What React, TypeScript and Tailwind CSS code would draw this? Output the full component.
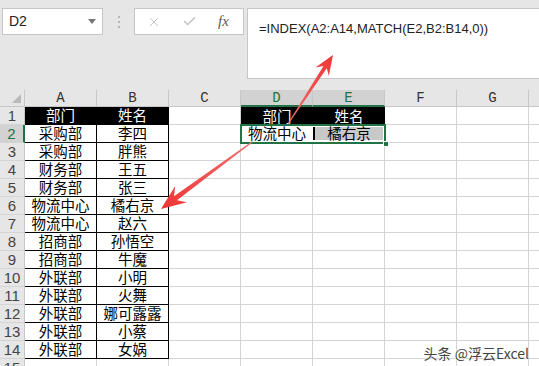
import { X, Check } from 'lucide-react';

const COLS = ['A', 'B', 'C', 'D', 'E', 'F', 'G'];

const table: [string, string][] = [
  ['部门', '姓名'],
  ['采购部', '李四'],
  ['采购部', '胖熊'],
  ['财务部', '王五'],
  ['财务部', '张三'],
  ['物流中心', '橘右京'],
  ['物流中心', '赵六'],
  ['招商部', '孙悟空'],
  ['招商部', '牛魔'],
  ['外联部', '小明'],
  ['外联部', '火舞'],
  ['外联部', '娜可露露'],
  ['外联部', '小蔡'],
  ['外联部', '女娲'],
];

const cjk = "font-['Noto_Sans_CJK_SC','Noto_Sans',sans-serif]";

// polygon for a tapered annotation arrow
function arrow(t: [number, number], p: [number, number], headLen: number, headHalf: number, tailW: number, neckW: number) {
  const dx = p[0] - t[0];
  const dy = p[1] - t[1];
  const len = Math.hypot(dx, dy);
  const ux = dx / len;
  const uy = dy / len;
  const nx = -uy;
  const ny = ux;
  const join = [p[0] - ux * headLen * 0.72, p[1] - uy * headLen * 0.72];
  const barb = [p[0] - ux * headLen, p[1] - uy * headLen];
  const pts = [
    [t[0] + (nx * tailW) / 2, t[1] + (ny * tailW) / 2],
    [join[0] + (nx * neckW) / 2, join[1] + (ny * neckW) / 2],
    [barb[0] + nx * headHalf, barb[1] + ny * headHalf],
    p,
    [barb[0] - nx * headHalf, barb[1] - ny * headHalf],
    [join[0] - (nx * neckW) / 2, join[1] - (ny * neckW) / 2],
    [t[0] - (nx * tailW) / 2, t[1] - (ny * tailW) / 2],
  ];
  return pts.map((q) => `${q[0].toFixed(1)},${q[1].toFixed(1)}`).join(' ');
}

function RowHeader({ n, active }: { n: number; active?: boolean }) {
  return (
    <div
      className={`w-[25px] h-full shrink-0 flex items-center justify-center text-[15px] leading-none font-['Liberation_Sans',sans-serif] border-b border-[#d4d4d4] ${
        active
          ? 'bg-[#d2d2d2] text-[#217346] border-r-2 border-r-[#217346]'
          : 'bg-[#e6e6e6] text-[#444] border-r border-r-[#c6c6c6]'
      }`}
    >
      {n}
    </div>
  );
}

export default function App() {
  return (
    <div className="relative w-[539px] h-[366px] overflow-hidden bg-[#e6e6e6]">
      {/* Formula bar */}
      <div className="h-[90px] flex items-start pt-2 pl-[2px]">
        <div className="w-[101px] h-[27px] bg-white border border-[#c6c6c6] flex items-center justify-between pl-[6px] pr-[6px]">
          <span className="text-[14px] text-[#222] font-['Liberation_Sans',sans-serif]">D2</span>
          <svg width="8" height="5" viewBox="0 0 8 5">
            <path d="M0 0 L8 0 L4 5 Z" fill="#777" />
          </svg>
        </div>
        <div className="w-[31px] h-[27px] flex flex-col items-center justify-center gap-[3px]">
          <div className="w-[2px] h-[2px] bg-[#b5b5b5]" />
          <div className="w-[2px] h-[2px] bg-[#b5b5b5]" />
          <div className="w-[2px] h-[2px] bg-[#b5b5b5]" />
        </div>
        <div className="w-[110px] h-[27px] bg-white border border-[#c6c6c6] flex items-center pl-[12px] gap-[21px]">
          <X size={14} strokeWidth={1.6} className="text-[#bdbdbd]" />
          <Check size={15} strokeWidth={2.2} className="text-[#bdbdbd]" />
          <span className="text-[15px] italic text-[#5a5a5a] font-['Liberation_Serif',serif] leading-none">fx</span>
        </div>
        <div className="ml-[3px] flex-1 h-[71px] bg-white border border-r-0 border-[#c6c6c6] pl-[11px] pt-[6px]">
          <span className="text-[13px] text-[#222] font-['Liberation_Sans',sans-serif]">=INDEX(A2:A14,MATCH(E2,B2:B14,0))</span>
        </div>
      </div>

      {/* Column headers */}
      <div className="flex h-[17px]">
        <div className="w-[25px] h-full shrink-0 border-r border-b border-[#c6c6c6] flex items-end justify-end pr-[3px] pb-[3px]">
          <svg width="9" height="9" viewBox="0 0 9 9">
            <path d="M9 0 L9 9 L0 9 Z" fill="#b9b9b9" />
          </svg>
        </div>
        {COLS.map((c) => {
          const sel = c === 'D' || c === 'E';
          return (
            <div
              key={c}
              className={`w-[72px] h-full shrink-0 flex items-center justify-center text-[14px] leading-none font-['Liberation_Mono',monospace] border-r border-[#c6c6c6] ${
                sel
                  ? 'bg-[#d2d2d2] text-[#217346] border-b-2 border-b-[#217346]'
                  : 'text-[#333] border-b border-b-[#c6c6c6]'
              }`}
            >
              {c}
            </div>
          );
        })}
        <div className="flex-1 border-b border-[#c6c6c6]" />
      </div>

      {/* Rows */}
      {Array.from({ length: 15 }, (_, i) => {
        const r = i + 1;
        const ab = table[i];
        const head = r === 1;
        return (
          <div key={r} className={`flex h-[18px] bg-white ${cjk} text-[14.5px] text-black`}>
            <RowHeader n={r} active={r === 2} />
            {['A', 'B'].map((c, j) => (
              <div
                key={c}
                className={`w-[72px] h-full shrink-0 flex items-center justify-center leading-none ${
                  ab ? 'border-r border-b border-black' : 'border-r border-b border-[#d4d4d4]'
                } ${head ? 'bg-black text-white' : ''}`}
              >
                {ab ? ab[j] : ''}
              </div>
            ))}
            <div className="w-[72px] h-full shrink-0 border-r border-b border-[#d4d4d4]" />
            {r === 1 ? (
              <>
                <div className="w-[72px] h-full shrink-0 bg-black text-white flex items-center justify-center leading-none">部门</div>
                <div className="w-[72px] h-full shrink-0 bg-black text-white flex items-center justify-center leading-none">姓名</div>
              </>
            ) : r === 2 ? (
              <div className="relative flex w-[144px] h-full shrink-0">
                <div className="w-[72px] h-full flex items-center justify-center leading-none border-b border-[#d4d4d4]">物流中心</div>
                <div className="w-[72px] h-full flex items-center justify-center leading-none border-b border-[#d4d4d4] py-[2px] pr-[2px]">
                  <div className="w-full h-full bg-[#c8c8c8] border-l-2 border-black flex items-center justify-center">橘右京</div>
                </div>
                <div className="absolute -left-[1px] -top-[1px] -right-[1px] -bottom-[1px] border-2 border-[#217346]" />
                <div className="absolute -right-[4px] -bottom-[4px] w-[6px] h-[6px] bg-[#217346] border border-white" />
              </div>
            ) : (
              <>
                <div className="w-[72px] h-full shrink-0 border-r border-b border-[#d4d4d4]" />
                <div className="w-[72px] h-full shrink-0 border-r border-b border-[#d4d4d4]" />
              </>
            )}
            <div className="w-[72px] h-full shrink-0 border-r border-b border-[#d4d4d4]" />
            <div className="w-[72px] h-full shrink-0 border-r border-b border-[#d4d4d4]" />
            <div className="flex-1 h-full border-b border-[#d4d4d4]" />
          </div>
        );
      })}

      {/* Annotation arrows */}
      <svg className="absolute left-0 top-0 pointer-events-none" width="539" height="366">
        <defs>
          <linearGradient id="g1" x1="252" y1="142" x2="161" y2="209" gradientUnits="userSpaceOnUse">
            <stop offset="0" stopColor="#f07070" />
            <stop offset="1" stopColor="#ef3535" />
          </linearGradient>
          <linearGradient id="g2" x1="288" y1="124" x2="333" y2="55" gradientUnits="userSpaceOnUse">
            <stop offset="0" stopColor="#f07070" />
            <stop offset="1" stopColor="#ef3535" />
          </linearGradient>
        </defs>
        <polygon points={arrow([252, 142], [161, 209], 25, 10, 1, 5)} fill="url(#g1)" />
        <polygon points={arrow([288, 124], [333, 55], 20, 8, 1, 4)} fill="url(#g2)" />
      </svg>

      <div className={`absolute right-[10px] bottom-[6px] text-[14px] leading-none text-[#444] ${cjk} [text-shadow:0_0_2px_#fff,0_0_2px_#fff]`}>
        头条 @浮云Excel
      </div>
    </div>
  );
}
